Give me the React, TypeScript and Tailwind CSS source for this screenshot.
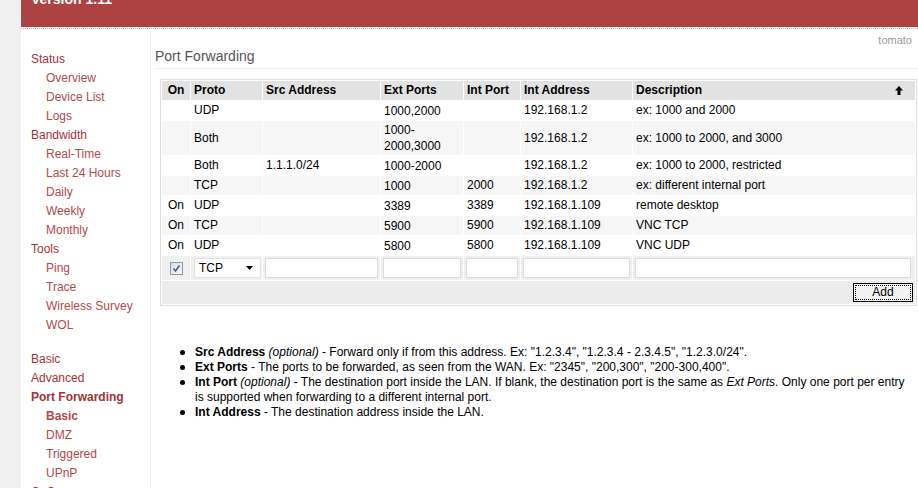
import React from "react"

const navi: { label: string; sub?: boolean; bold?: boolean; gap?: boolean }[] = [
  { label: "Status" },
  { label: "Overview", sub: true },
  { label: "Device List", sub: true },
  { label: "Logs", sub: true },
  { label: "Bandwidth" },
  { label: "Real-Time", sub: true },
  { label: "Last 24 Hours", sub: true },
  { label: "Daily", sub: true },
  { label: "Weekly", sub: true },
  { label: "Monthly", sub: true },
  { label: "Tools" },
  { label: "Ping", sub: true },
  { label: "Trace", sub: true },
  { label: "Wireless Survey", sub: true },
  { label: "WOL", sub: true },
  { label: "Basic", gap: true },
  { label: "Advanced" },
  { label: "Port Forwarding", bold: true },
  { label: "Basic", sub: true, bold: true },
  { label: "DMZ", sub: true },
  { label: "Triggered", sub: true },
  { label: "UPnP", sub: true },
  { label: "QoS" },
  { label: "Access Restriction" },
]

const rows = [
  { on: "", proto: "UDP", src: "", ext: "1000,2000", port: "", addr: "192.168.1.2", desc: "ex: 1000 and 2000" },
  { on: "", proto: "Both", src: "", ext: "1000-2000,3000", port: "", addr: "192.168.1.2", desc: "ex: 1000 to 2000, and 3000" },
  { on: "", proto: "Both", src: "1.1.1.0/24", ext: "1000-2000", port: "", addr: "192.168.1.2", desc: "ex: 1000 to 2000, restricted" },
  { on: "", proto: "TCP", src: "", ext: "1000", port: "2000", addr: "192.168.1.2", desc: "ex: different internal port" },
  { on: "On", proto: "UDP", src: "", ext: "3389", port: "3389", addr: "192.168.1.109", desc: "remote desktop" },
  { on: "On", proto: "TCP", src: "", ext: "5900", port: "5900", addr: "192.168.1.109", desc: "VNC TCP" },
  { on: "On", proto: "UDP", src: "", ext: "5800", port: "5800", addr: "192.168.1.109", desc: "VNC UDP" },
]

function TextBox() {
  return <div className="w-full h-[20px] bg-white border border-[#dcdcdc]" />
}

export default function App() {
  return (
    <div className="w-[918px] h-[488px] overflow-hidden bg-[#f0f0f0] font-['Liberation_Sans',Arial,sans-serif] text-[12px] text-black">
      <div className="ml-[21px] h-full bg-white flex flex-col">

        {/* header */}
        <div className="h-[27px] shrink-0 bg-[#ae4242] overflow-hidden pl-[10px]">
          <div className="-mt-[8px] text-[14px] leading-[14px] font-bold text-white">Version 1.11</div>
        </div>
        <div className="h-[2px] shrink-0 border-b border-dotted border-[#dca4a4]" />

        <div className="flex flex-1 min-h-0">

          {/* navi */}
          <div className="w-[130px] shrink-0 mt-[2px] pt-[19px] pl-[10px] border-r border-[#eeeeee]">
            {navi.map((n, i) => (
              <div
                key={i}
                className={`leading-[19px] whitespace-nowrap ${n.gap ? "mt-[15px]" : ""} ${n.sub ? "pl-[15px] text-[#b04a4a]" : "text-[#a13434]"} ${n.bold ? "font-bold text-[#9a2e2e]" : ""}`}
              >
                {n.label}
              </div>
            ))}
          </div>

          {/* content */}
          <div className="flex-1 min-w-0">
            <div className="pt-[5px] pr-[6px] text-right text-[11px] leading-[13px] text-[#999999]">tomato</div>
            <div className="ml-[4px] pb-[3px] border-b border-[#eeeeee] text-[14px] leading-[18px] text-[#555555]">
              Port Forwarding
            </div>

            <div className="mt-[10px] ml-[9px] mr-[1px] border border-[#dddddd]">
              <table className="w-full table-fixed border-separate [border-spacing:1px_1px]">
                <colgroup>
                  <col className="w-[28px]" />
                  <col className="w-[71px]" />
                  <col className="w-[117px]" />
                  <col className="w-[82px]" />
                  <col className="w-[56px]" />
                  <col className="w-[111px]" />
                  <col />
                </colgroup>
                <thead>
                  <tr className="bg-[#e2e2e2] font-bold">
                    <td className="h-[19px] p-0 text-center leading-[15px]">On</td>
                    <td className="px-[3px] py-0 leading-[15px]">Proto</td>
                    <td className="px-[3px] py-0 leading-[15px]">Src Address</td>
                    <td className="px-[3px] py-0 leading-[15px]">Ext Ports</td>
                    <td className="px-[3px] py-0 leading-[15px]">Int Port</td>
                    <td className="px-[3px] py-0 leading-[15px]">Int Address</td>
                    <td className="px-[3px] py-0 leading-[15px]">
                      <div className="flex items-center justify-between pr-[9px]">
                        <span>Description</span>
                        <svg width="8" height="9" viewBox="0 0 8 9">
                          <path d="M4 0 L8 4.5 H5.5 V9 H2.5 V4.5 H0 Z" fill="#000" />
                        </svg>
                      </div>
                    </td>
                  </tr>
                </thead>
                <tbody>
                  {rows.map((r, i) => (
                    <tr key={i} className={i % 2 === 1 ? "bg-[#f6f6f6]" : "bg-white"}>
                      <td className={`${i === 1 ? "h-[34px]" : "h-[19px]"} p-0 text-center leading-[15px]`}>{r.on}</td>
                      <td className="px-[3px] py-0 leading-[15px]">{r.proto}</td>
                      <td className="px-[3px] py-0 leading-[15px]">{r.src}</td>
                      <td className="px-[3px] py-0 leading-[16px]">{r.ext}</td>
                      <td className="px-[3px] py-0 leading-[15px]">{r.port}</td>
                      <td className="px-[3px] py-0 leading-[15px]">{r.addr}</td>
                      <td className="px-[3px] py-0 leading-[15px]">{r.desc}</td>
                    </tr>
                  ))}

                  {/* edit row */}
                  <tr className="bg-[#f0f0f0]">
                    <td className="h-[24px] p-0">
                      <div className="flex justify-center">
                        <span className="w-[13px] h-[13px] border border-[#8e99ab] bg-gradient-to-br from-[#d9dee6] to-[#f4f5f7] flex items-center justify-center">
                          <svg width="9" height="9" viewBox="0 0 9 9">
                            <path d="M1.5 4.5 L3.5 7 L7.5 1.5" fill="none" stroke="#4b6187" strokeWidth="1.6" />
                          </svg>
                        </span>
                      </div>
                    </td>
                    <td className="pl-[3px] pr-0 py-0">
                      <div className="w-[67px] h-[20px] bg-white border border-[#e2e2e2] flex items-center justify-between pl-[4px] pr-[7px]">
                        <span className="leading-[15px]">TCP</span>
                        <svg width="7" height="4" viewBox="0 0 7 4">
                          <path d="M0 0 H7 L3.5 4 Z" fill="#000" />
                        </svg>
                      </div>
                    </td>
                    <td className="pl-[2px] pr-[2px] py-0"><TextBox /></td>
                    <td className="pl-[2px] pr-[2px] py-0"><TextBox /></td>
                    <td className="pl-[2px] pr-[2px] py-0"><TextBox /></td>
                    <td className="pl-[2px] pr-[2px] py-0"><TextBox /></td>
                    <td className="pl-[2px] pr-[4px] py-0"><TextBox /></td>
                  </tr>

                  {/* add row */}
                  <tr className="bg-[#ececec]">
                    <td colSpan={7} className="h-[23px] py-0 pr-[2px] text-right">
                      <button className="inline-block align-middle w-[60px] h-[19px] border border-black bg-[#f2f2f2] p-[1px]">
                        <span className="h-full border border-dotted border-black flex items-center justify-center leading-[13px]">
                          Add
                        </span>
                      </button>
                    </td>
                  </tr>
                </tbody>
              </table>
            </div>

            {/* notes */}
            <ul className="mt-[39px] pl-[29px] pr-[2px]">
              <li className="flex leading-[15px]">
                <span className="w-[15px] h-[15px] shrink-0 flex items-center"><span className="w-[5px] h-[5px] rounded-full bg-black" /></span>
                <span><b>Src Address</b> <i>(optional)</i> - Forward only if from this address. Ex: "1.2.3.4", "1.2.3.4 - 2.3.4.5", "1.2.3.0/24".</span>
              </li>
              <li className="flex leading-[15px]">
                <span className="w-[15px] h-[15px] shrink-0 flex items-center"><span className="w-[5px] h-[5px] rounded-full bg-black" /></span>
                <span><b>Ext Ports</b> - The ports to be forwarded, as seen from the WAN. Ex: "2345", "200,300", "200-300,400".</span>
              </li>
              <li className="flex leading-[15px]">
                <span className="w-[15px] h-[15px] shrink-0 flex items-center"><span className="w-[5px] h-[5px] rounded-full bg-black" /></span>
                <span className="whitespace-nowrap">
                  <b>Int Port</b> <i>(optional)</i> - The destination port inside the LAN. If blank, the destination port is the same as <i>Ext Ports</i>. Only one port per entry
                  <br />
                  is supported when forwarding to a different internal port.
                </span>
              </li>
              <li className="flex leading-[15px]">
                <span className="w-[15px] h-[15px] shrink-0 flex items-center"><span className="w-[5px] h-[5px] rounded-full bg-black" /></span>
                <span><b>Int Address</b> - The destination address inside the LAN.</span>
              </li>
            </ul>
          </div>
        </div>
      </div>
    </div>
  )
}
